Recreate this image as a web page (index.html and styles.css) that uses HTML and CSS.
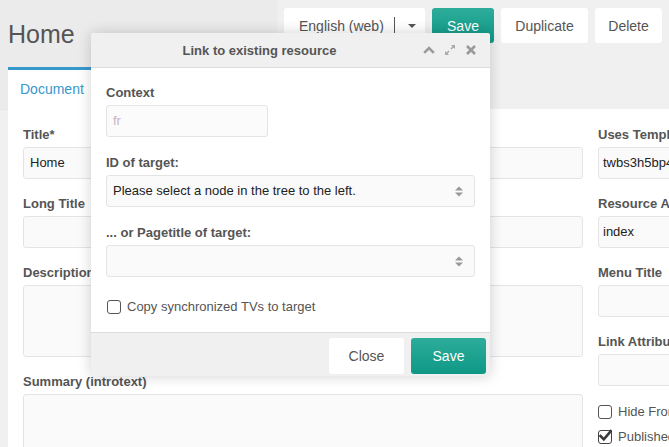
FILE: index.html
```html
<!DOCTYPE html>
<html lang="en">
<head>
<meta charset="utf-8">
<title>Home</title>
<link rel="stylesheet" href="styles.css">
</head>
<body>
<div class="app">
  <div class="top">
    <header class="topbar">
      <div class="title-area"><h1>Home</h1></div>
      <div class="actions">
        <button class="btn btn-lang">English (web)<span class="sep"></span><span class="caret"></span></button>
        <button class="btn btn-primary btn-save">Save</button>
        <button class="btn btn-dup">Duplicate</button>
        <button class="btn btn-del">Delete</button>
        <button class="btn btn-view">View</button>
      </div>
    </header>
    <nav class="tabs">
      <div class="tab active">Document</div>
    </nav>
  </div>

  <main class="panel">
    <div class="col-main">
      <div class="field">
        <label class="lbl">Title*</label>
        <div class="input">Home</div>
      </div>
      <div class="field">
        <label class="lbl">Long Title</label>
        <div class="input"></div>
      </div>
      <div class="field">
        <label class="lbl">Description</label>
        <div class="input textarea"></div>
      </div>
      <div class="field">
        <label class="lbl">Summary (introtext)</label>
        <div class="input textarea"></div>
      </div>
    </div>
    <div class="col-side">
      <div class="field">
        <label class="lbl">Uses Template</label>
        <div class="input side">twbs3h5bp4 (Bootstrap)</div>
      </div>
      <div class="field">
        <label class="lbl">Resource Alias</label>
        <div class="input side">index</div>
      </div>
      <div class="field">
        <label class="lbl">Menu Title</label>
        <div class="input side"></div>
      </div>
      <div class="field">
        <label class="lbl">Link Attributes</label>
        <div class="input side"></div>
      </div>
      <div class="checks">
        <div class="check"><span class="cb"></span>Hide From Menus</div>
        <div class="check"><span class="cb checked"><svg viewBox="0 0 14 14" width="14" height="14"><path d="M2.5 7 L5.8 10.3 L12.8 2.2" fill="none" stroke="#3a3a3a" stroke-width="2.6" stroke-linecap="square"/></svg></span>Published</div>
      </div>
    </div>
  </main>

  <div class="modal">
    <div class="modal-head">
      <div class="modal-title">Link to existing resource</div>
      <div class="tools">
        <svg class="t-up" width="12" height="8" viewBox="0 0 12 8"><polyline points="1.2,6.8 6,2 10.8,6.8" fill="none" stroke="#9a9a9a" stroke-width="2.6"/></svg>
        <svg class="t-exp" width="12" height="12" viewBox="0 0 12 12"><path d="M7 1 H11 V5 Z M1 7 V11 H5 Z" fill="#a8a8a8"/><path d="M9.5 2.5 L7 5 M2.5 9.5 L5 7" stroke="#a8a8a8" stroke-width="1.6"/></svg>
        <svg class="t-x" width="10" height="10" viewBox="0 0 10 10"><path d="M1 1 L9 9 M9 1 L1 9" stroke="#9a9a9a" stroke-width="2.6"/></svg>
      </div>
    </div>
    <div class="modal-body">
      <div class="mfield">
        <label class="lbl">Context</label>
        <div class="input ctx"><span class="ph">fr</span></div>
      </div>
      <div class="mfield">
        <label class="lbl">ID of target:</label>
        <div class="input select"><span class="val">Please select a node in the tree to the left.</span>
          <svg width="10" height="11" viewBox="0 0 10 11"><path d="M1 4.5 L5 0.5 L9 4.5 Z M1 6.5 L5 10.5 L9 6.5 Z" fill="#999"/></svg>
        </div>
      </div>
      <div class="mfield">
        <label class="lbl">... or Pagetitle of target:</label>
        <div class="input select"><span class="val"></span>
          <svg width="10" height="11" viewBox="0 0 10 11"><path d="M1 4.5 L5 0.5 L9 4.5 Z M1 6.5 L5 10.5 L9 6.5 Z" fill="#999"/></svg>
        </div>
      </div>
      <div class="check mcheck"><span class="cb"></span>Copy synchronized TVs to target</div>
    </div>
    <div class="modal-foot">
      <button class="btn fbtn">Close</button>
      <button class="btn btn-primary fbtn">Save</button>
    </div>
  </div>
</div>
</body>
</html>
```

FILE: styles.css
```css
* { box-sizing: border-box; }
html, body { margin: 0; padding: 0; overflow: hidden; }
body {
  width: 669px;
  height: 447px;
  position: relative;
  background: #f0f0f0;
  font-family: "Liberation Sans", Arial, sans-serif;
  color: #555;
}
.app { width: 1000px; }

.top { background: linear-gradient(to right, #ebebeb 277px, #f0f0f0 277px); }
.topbar { display: flex; height: 60px; }
.title-area { width: 284px; padding-left: 8px; }
h1 {
  margin: 0;
  padding-top: 19px;
  font-size: 25px;
  line-height: 30px;
  font-weight: normal;
  color: #555;
}
.actions { display: flex; gap: 7px; padding-top: 8px; align-items: flex-start; }
.btn {
  height: 35px;
  border: 0;
  border-radius: 3px;
  background: #fff;
  color: #555;
  font-family: "Liberation Sans", Arial, sans-serif;
  font-size: 14px;
  padding: 0;
  display: inline-flex;
  align-items: center;
  justify-content: center;
}
.btn-lang { width: 141px; justify-content: flex-start; padding-left: 15px; }
.btn-lang .sep { width: 1px; height: 17px; background: #555; margin-left: 10px; }
.btn-lang .caret {
  width: 0; height: 0;
  border-left: 4px solid transparent;
  border-right: 4px solid transparent;
  border-top: 4px solid #555;
  margin-left: 13px;
}
.btn-primary { background: linear-gradient(#2dac9a, #0f9886); color: #fff; }
.btn-save { width: 62px; }
.btn-dup { width: 87px; }
.btn-del { width: 67px; }
.btn-view { width: 60px; }

.tabs { display: flex; height: 50px; padding: 7px 0 0 8px; border-bottom: 1px solid #e6e6e6; }
.tab {
  height: 43px;
  padding: 0 12px;
  background: #fff;
  border-top: 3px solid #3697cd;
  color: #3697cd;
  font-size: 14px;
  line-height: 38px;
  width: 92px;
}

.panel {
  margin-left: 8px;
  margin-top: -1px;
  background: #fff;
  display: grid;
  grid-template-columns: 560px 300px;
  column-gap: 15px;
  padding: 18px 15px;
  height: 400px;
}
.field { margin-bottom: 17px; }
.lbl {
  display: block;
  font-weight: bold;
  font-size: 13px;
  line-height: 16px;
  margin-bottom: 4px;
  color: #555;
}
.input {
  height: 32px;
  border: 1px solid #e4e4e4;
  border-radius: 3px;
  background: #fafafa;
  font-size: 13px;
  line-height: 30px;
  color: #222;
  padding: 0 6px;
  white-space: nowrap;
  overflow: hidden;
}
.input.side { padding: 0 4px; }
.textarea { height: 72px; }

.checks { margin-top: -4px; }
.check {
  display: flex;
  align-items: center;
  font-size: 13px;
  line-height: 16px;
  color: #555;
  height: 25px;
}
.cb {
  width: 14px;
  height: 14px;
  border: 1.5px solid #555;
  border-radius: 3px;
  margin-right: 6px;
  flex: none;
  position: relative;
  background: #fff;
}
.cb.checked { border-color: #444; }
.cb.checked svg { position: absolute; left: -1.5px; top: -1.5px; }

.modal {
  position: absolute;
  left: 91px;
  top: 33px;
  width: 399px;
  background: #fff;
  border-radius: 3px 3px 0 0;
  box-shadow: 0 0 14px rgba(0, 0, 0, 0.18);
}
.modal-head {
  height: 35px;
  display: flex;
  align-items: center;
  background: #f0f0f0;
  border-bottom: 1px solid #dcdcdc;
  border-radius: 3px 3px 0 0;
}
.modal-title {
  flex: 1;
  text-align: center;
  font-weight: bold;
  font-size: 13px;
  color: #555;
  padding-left: 5px;
}
.tools { width: 67px; display: flex; align-items: center; padding-right: 13px; }
.t-up { margin-right: 9px; }
.t-exp { margin-right: 10px; }
.modal-body { padding: 17px 15px 17px; }
.mfield { margin-bottom: 18px; }
.input.ctx { width: 162px; background: #fbfbfb; }
.ph { color: #c3b4c6; }
.select { display: flex; align-items: center; justify-content: space-between; padding-right: 10px; }
.select .val { color: #222; }
.mcheck { height: 16px; margin-top: 22px; padding-left: 1px; }
.modal-foot {
  display: flex;
  justify-content: flex-end;
  gap: 7px;
  padding: 5px 4px 2px;
  background: #f0f0f0;
  border-top: 1px solid #dcdcdc;
}
.fbtn { width: 75px; height: 36px; }
```
